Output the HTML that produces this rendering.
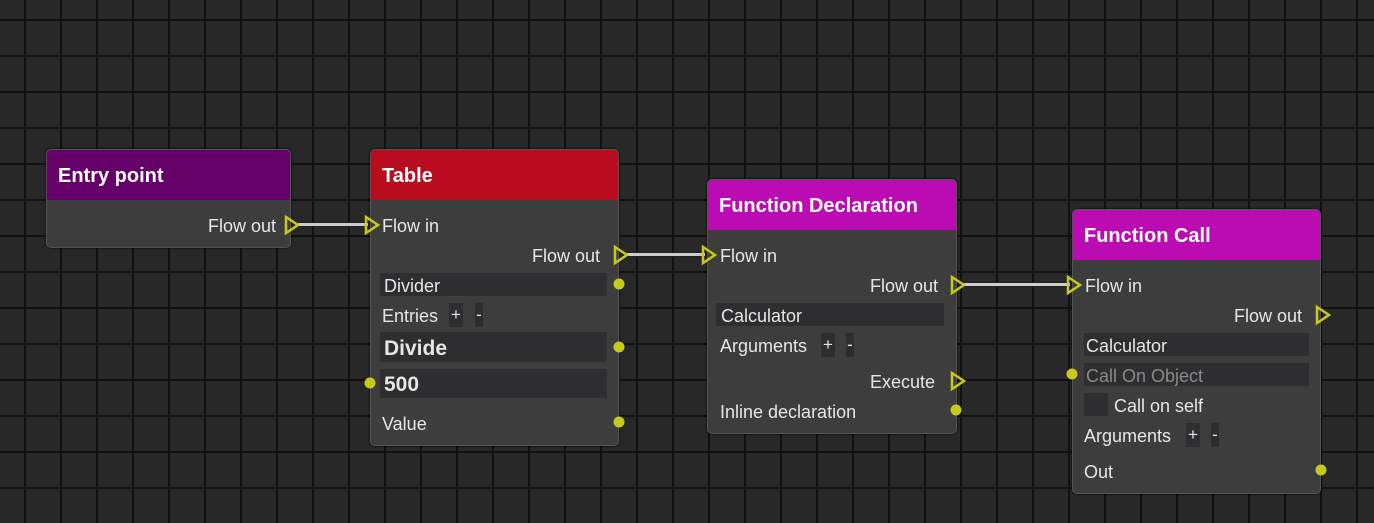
<!DOCTYPE html>
<html><head><meta charset="utf-8"><style>
body{margin:0;width:1374px;height:523px;overflow:hidden;position:relative;font-family:"Liberation Sans",sans-serif;color:#e6e6e6;
background-color:#282828;
background-image:linear-gradient(90deg,transparent 24px,#111 24px,#111 26px,transparent 26px),linear-gradient(180deg,transparent 19px,#111 19px,#111 21px,transparent 21px);
background-size:36px 36px;}
.a{position:absolute}
.node{position:absolute;background:#3d3d3d;border:1px solid #555;border-radius:5px;overflow:hidden;box-shadow:0 0 2px #000}
.hd{height:50px;color:#fff;font-weight:bold;font-size:20px;line-height:53px;padding-left:11px}
.t{position:absolute;font-size:18px;line-height:20px;white-space:nowrap;transform:translateY(-9px)}
.f{position:absolute;background:#2e2e30}
.b{position:absolute;background:#2e2e30;font-size:17px;text-align:center;line-height:24px}
.dot{position:absolute;width:11px;height:11px;border-radius:50%;background:#c8c81e;transform:translate(-5.5px,-5.5px)}
.wire{position:absolute;height:3px;background:#ccc;box-shadow:0 0 1px 1px #222}
</style></head><body>
<div class="wire" style="left:298px;top:223px;width:70px"></div>
<div class="wire" style="left:627px;top:253px;width:78px"></div>
<div class="wire" style="left:964px;top:283px;width:106px"></div>

<div class="node" style="left:46px;top:149px;width:243px;height:97px"><div class="hd" style="background:#650068">Entry point</div></div>
<div class="node" style="left:370px;top:149px;width:247px;height:295px"><div class="hd" style="background:#b90c1f">Table</div></div>
<div class="node" style="left:707px;top:179px;width:248px;height:253px"><div class="hd" style="background:#bb0cb3">Function Declaration</div></div>
<div class="node" style="left:1072px;top:209px;width:247px;height:283px"><div class="hd" style="background:#bb0cb3">Function Call</div></div>

<svg class="a" style="left:0;top:0" width="1374" height="523">
<g fill="none" stroke="#c8c81e" stroke-width="2.5">
<path d="M286 217 L298 225 L286 233 Z"/>
<path d="M366 217 L378 225 L366 233 Z"/>
<path d="M615 247 L627 255 L615 263 Z"/>
<path d="M703 247 L715 255 L703 263 Z"/>
<path d="M952 277 L964 285 L952 293 Z"/>
<path d="M1068 277 L1080 285 L1068 293 Z"/>
<path d="M1317 307 L1329 315 L1317 323 Z"/>
<path d="M952 373 L964 381 L952 389 Z"/>
</g></svg>

<div class="t" style="left:208px;top:225px">Flow out</div>
<div class="t" style="left:382px;top:225px">Flow in</div>
<div class="t" style="left:532px;top:255px">Flow out</div>
<div class="f" style="left:380px;top:273px;width:227px;height:23px"></div>
<div class="t" style="left:384px;top:285px">Divider</div>
<div class="dot" style="left:619px;top:284px"></div>
<div class="t" style="left:382px;top:315px">Entries</div>
<div class="b" style="left:449px;top:303px;width:14px;height:24px">+</div>
<div class="b" style="left:475px;top:303px;width:8px;height:24px">-</div>
<div class="f" style="left:380px;top:332px;width:227px;height:30px"></div>
<div class="t" style="left:384px;top:348px;font-weight:bold;font-size:21px">Divide</div>
<div class="dot" style="left:619px;top:347px"></div>
<div class="f" style="left:380px;top:369px;width:227px;height:29px"></div>
<div class="t" style="left:384px;top:384px;font-weight:bold;font-size:21px">500</div>
<div class="dot" style="left:370px;top:383px"></div>
<div class="t" style="left:382px;top:423px">Value</div>
<div class="dot" style="left:619px;top:422px"></div>

<div class="t" style="left:720px;top:255px">Flow in</div>
<div class="t" style="left:870px;top:285px">Flow out</div>
<div class="f" style="left:716px;top:303px;width:228px;height:23px"></div>
<div class="t" style="left:721px;top:315px">Calculator</div>
<div class="t" style="left:720px;top:345px">Arguments</div>
<div class="b" style="left:821px;top:333px;width:14px;height:24px">+</div>
<div class="b" style="left:846px;top:333px;width:8px;height:24px">-</div>
<div class="t" style="left:870px;top:381px">Execute</div>
<div class="t" style="left:720px;top:411px">Inline declaration</div>
<div class="dot" style="left:956px;top:410px"></div>

<div class="t" style="left:1085px;top:285px">Flow in</div>
<div class="t" style="left:1234px;top:315px">Flow out</div>
<div class="f" style="left:1084px;top:333px;width:225px;height:23px"></div>
<div class="t" style="left:1086px;top:345px">Calculator</div>
<div class="f" style="left:1084px;top:363px;width:225px;height:23px"></div>
<div class="t" style="left:1086px;top:375px;color:#8a8a8a">Call On Object</div>
<div class="dot" style="left:1072px;top:374px"></div>
<div class="f" style="left:1084px;top:393px;width:24px;height:23px"></div>
<div class="t" style="left:1114px;top:405px">Call on self</div>
<div class="t" style="left:1084px;top:435px">Arguments</div>
<div class="b" style="left:1186px;top:423px;width:14px;height:24px">+</div>
<div class="b" style="left:1211px;top:423px;width:8px;height:24px">-</div>
<div class="t" style="left:1084px;top:471px">Out</div>
<div class="dot" style="left:1321px;top:470px"></div>
</body></html>
